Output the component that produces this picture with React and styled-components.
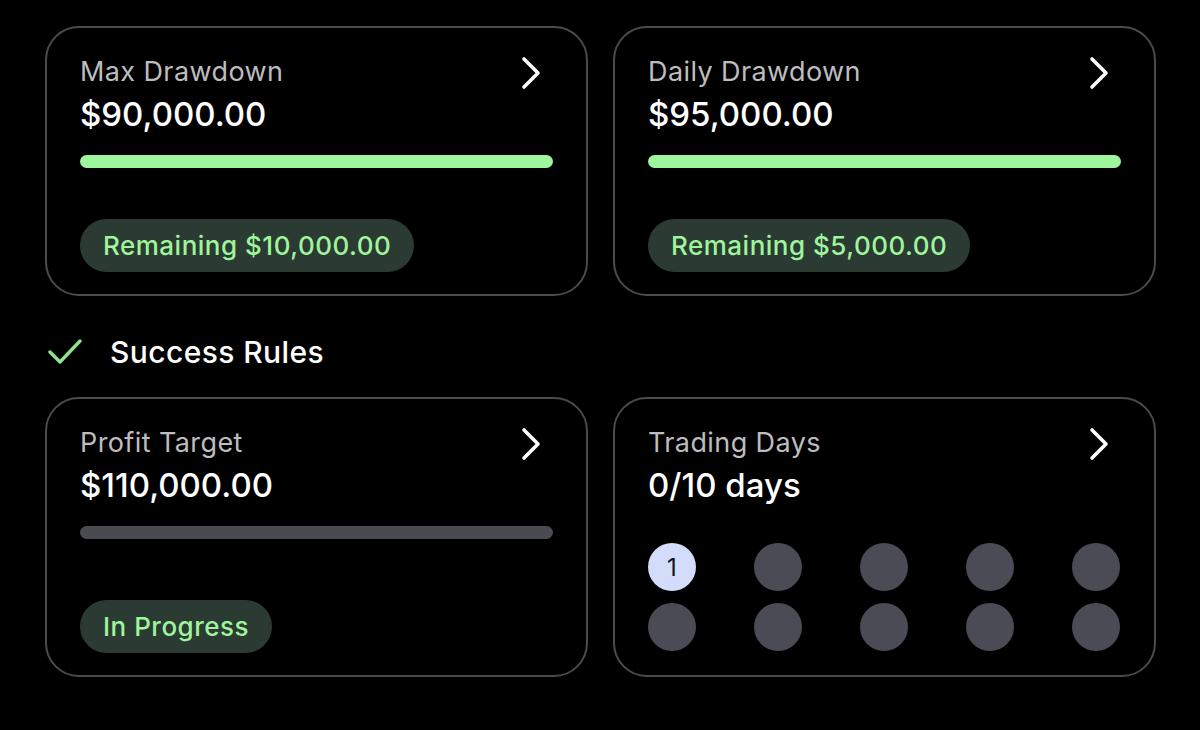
import React from 'react'
import styled, { createGlobalStyle } from 'styled-components'

const GlobalStyle = createGlobalStyle`
  html, body {
    margin: 0;
    padding: 0;
    background: #000;
    height: 100%;
    overflow: hidden;
  }
  body {
    font-family: Inter, "Noto Sans", sans-serif;
    color: #fff;
    -webkit-font-smoothing: antialiased;
  }
`

const Page = styled.div`
  padding: 26px 45px 0 45px;
  width: 1110px;
`

const CardGrid = styled.div`
  display: grid;
  grid-template-columns: 543px 543px;
  column-gap: 25px;
`

const Card = styled.div`
  border: 2px solid #4a4a4f;
  border-radius: 34px;
  padding: 28px 33px 22px 33px;
  display: flex;
  flex-direction: column;
  min-height: ${(p) => p.minH || 0}px;
  box-sizing: border-box;
`

const CardHead = styled.div`
  display: flex;
  justify-content: space-between;
  align-items: flex-start;
`

const Titles = styled.div`
  display: flex;
  flex-direction: column;
`

const Label = styled.div`
  font-size: 27px;
  line-height: 32px;
  color: #bdbdbf;
  letter-spacing: 0.4px;
`

const Value = styled.div`
  font-size: 33px;
  line-height: 40px;
  color: #fff;
  font-weight: 500;
  margin-top: 6px;
`

const Bar = styled.div`
  height: 13px;
  border-radius: 7px;
  background: ${(p) => (p.filled ? '#9ef59b' : '#4a4a52')};
  margin-top: 21px;
`

const Pill = styled.div`
  margin-top: auto;
  align-self: flex-start;
  height: 53px;
  padding: 0 23px;
  border-radius: 27px;
  background: #2b3a32;
  color: #9ef59b;
  font-size: 26px;
  font-weight: 500;
  letter-spacing: 0.5px;
  display: flex;
  align-items: center;
`

const Chevron = styled.svg`
  width: 20px;
  height: 34px;
  margin-right: 12px;
  flex: none;
`

const SectionHead = styled.div`
  display: flex;
  align-items: center;
  box-sizing: border-box;
  height: 101px;
  padding: 10px 0 0 3px;
  gap: 28px;
`

const SectionTitle = styled.div`
  font-size: 30px;
  font-weight: 500;
  letter-spacing: 0.4px;
`

const DayGrid = styled.div`
  margin: 38px 0 2px 0;
  display: grid;
  grid-template-columns: repeat(5, 48px);
  justify-content: space-between;
  row-gap: 12px;
  padding-right: 1px;
`

const Day = styled.div`
  width: 48px;
  height: 48px;
  border-radius: 50%;
  background: ${(p) => (p.active ? '#d4dcfb' : '#4a4b55')};
  color: #111522;
  font-size: 24px;
  display: flex;
  align-items: center;
  justify-content: center;
`

const ChevronIcon = () => (
  <Chevron viewBox="0 0 20 34" fill="none">
    <path
      d="M3 3 L17 17 L3 31"
      stroke="#fff"
      strokeWidth="3.6"
      strokeLinecap="round"
      strokeLinejoin="round"
    />
  </Chevron>
)

const CheckIcon = () => (
  <svg width="34" height="26" viewBox="0 0 34 26" fill="none">
    <path
      d="M2 13 L12 23 L32 2"
      stroke="#8fe38d"
      strokeWidth="3.4"
      strokeLinecap="round"
      strokeLinejoin="round"
    />
  </svg>
)

const MetricCard = ({ label, value, filled, pill }) => (
  <Card minH={270}>
    <CardHead>
      <Titles>
        <Label>{label}</Label>
        <Value>{value}</Value>
      </Titles>
      <ChevronIcon />
    </CardHead>
    <Bar filled={filled} />
    <Pill>{pill}</Pill>
  </Card>
)

const days = Array.from({ length: 10 }, (_, i) => i)

const App = () => (
  <>
    <GlobalStyle />
    <Page>
      <CardGrid>
        <MetricCard
          label="Max Drawdown"
          value="$90,000.00"
          filled
          pill="Remaining $10,000.00"
        />
        <MetricCard
          label="Daily Drawdown"
          value="$95,000.00"
          filled
          pill="Remaining $5,000.00"
        />
      </CardGrid>
      <SectionHead>
        <CheckIcon />
        <SectionTitle>Success Rules</SectionTitle>
      </SectionHead>
      <CardGrid>
        <MetricCard
          label="Profit Target"
          value="$110,000.00"
          pill="In Progress"
        />
        <Card>
          <CardHead>
            <Titles>
              <Label>Trading Days</Label>
              <Value>0/10 days</Value>
            </Titles>
            <ChevronIcon />
          </CardHead>
          <DayGrid>
            {days.map((d) => (
              <Day key={d} active={d === 0}>
                {d === 0 ? '1' : ''}
              </Day>
            ))}
          </DayGrid>
        </Card>
      </CardGrid>
    </Page>
  </>
)

export default App
